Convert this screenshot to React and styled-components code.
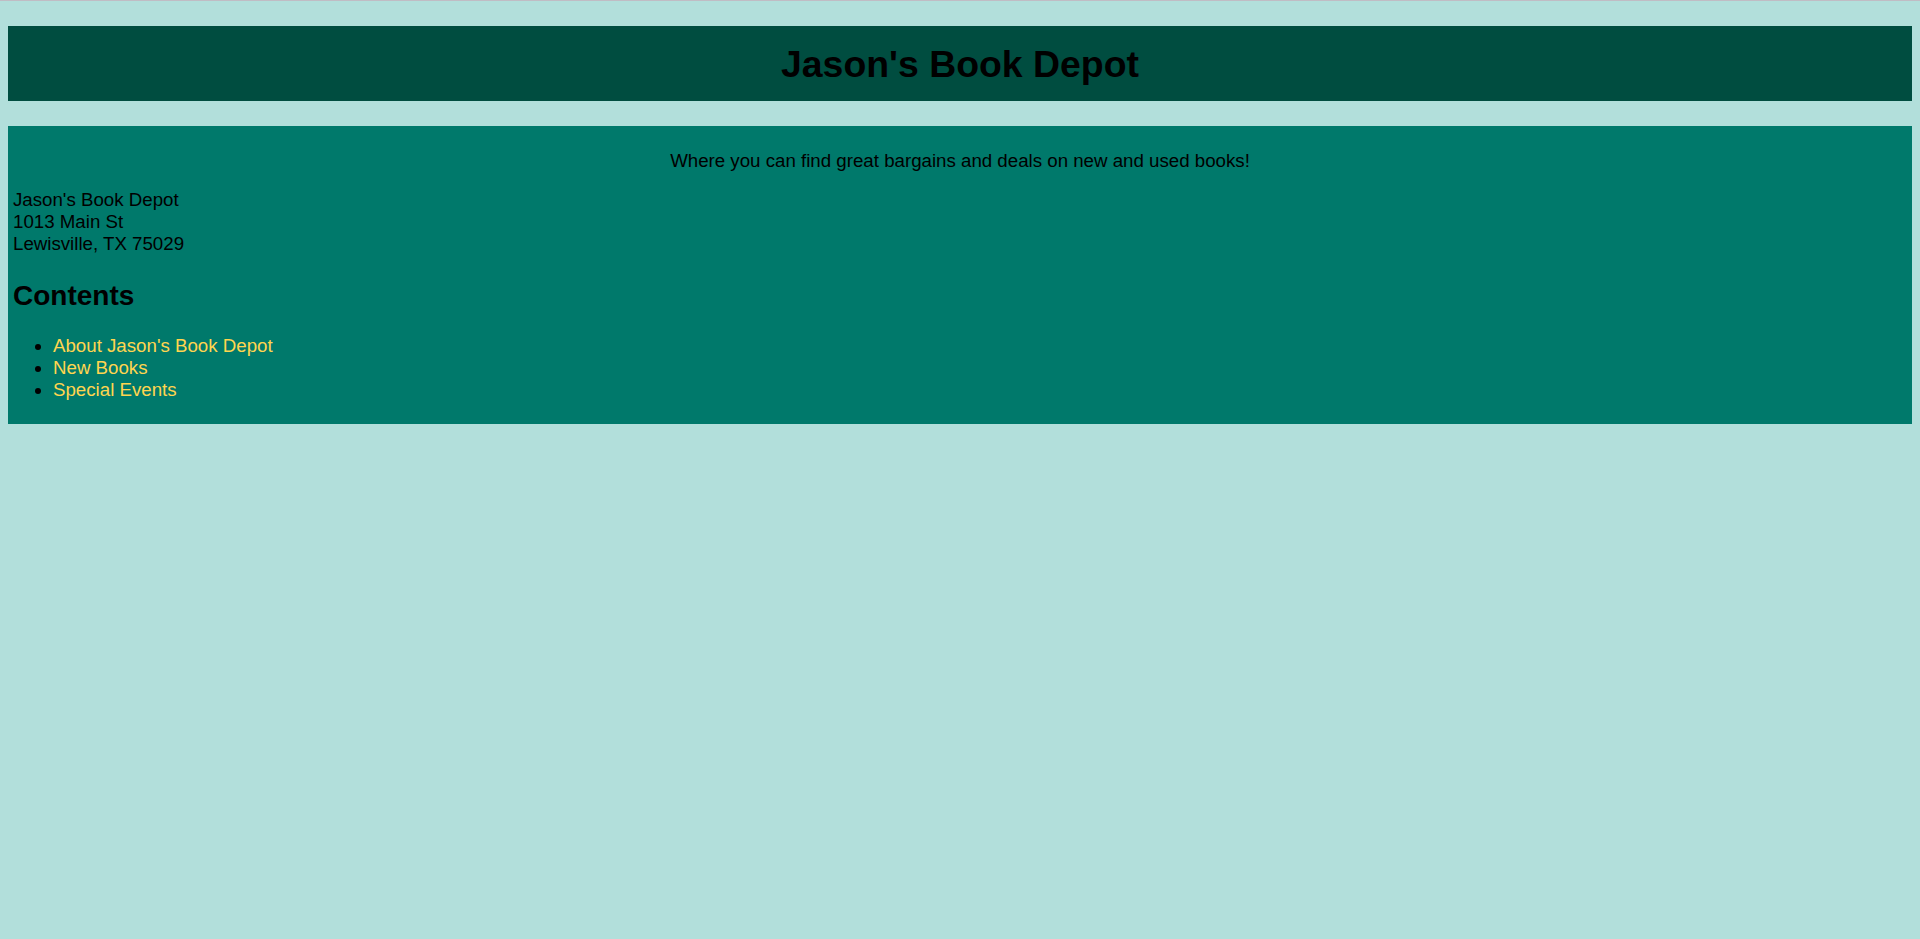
import React from "react";
import styled, { createGlobalStyle } from "styled-components";

const GlobalStyle = createGlobalStyle`
  html {
    background: #b2dfdb;
    border-top: 1px solid #c0bcc4;
  }
  body {
    margin: 0;
    padding: 0 8px;
    background: #b2dfdb;
    font-family: "Liberation Sans", Arial, sans-serif;
    font-size: 18.7px;
    color: #000;
  }
`;

const Page = styled.div`
  display: flex;
  flex-direction: column;
  gap: 25px;
  padding-top: 25px;
`;

const Header = styled.header`
  background: #004d40;
  height: 75px;
  display: flex;
  align-items: center;
  justify-content: center;
`;

const Title = styled.h1`
  margin: 0;
  font-size: 37.4px;
  font-weight: bold;
  line-height: 42px;
  padding-top: 1px;
`;

const Panel = styled.main`
  background: #00796b;
  padding: 4px 5px 5px;
  display: flow-root;
`;

const Tagline = styled.p`
  text-align: center;
  margin: 20px 0 17px;
  line-height: 22px;
`;

const Address = styled.address`
  font-style: normal;
  line-height: 22px;
`;

const SectionTitle = styled.h2`
  font-size: 28px;
  font-weight: bold;
  margin: 25px 0 23px;
  line-height: 32px;
`;

const LinkList = styled.ul`
  margin: 0 0 18px;
  padding-left: 40px;
  line-height: 22px;
  li::marker {
    color: #000;
  }
`;

const NavLink = styled.a`
  color: #ffd54f;
  text-decoration: none;
`;

const links = ["About Jason's Book Depot", "New Books", "Special Events"];

export default function App() {
  return (
    <>
      <GlobalStyle />
      <Page>
        <Header>
          <Title>Jason's Book Depot</Title>
        </Header>
        <Panel>
          <Tagline>
            Where you can find great bargains and deals on new and used books!
          </Tagline>
          <Address>
            Jason's Book Depot
            <br />
            1013 Main St
            <br />
            Lewisville, TX 75029
          </Address>
          <SectionTitle>Contents</SectionTitle>
          <LinkList>
            {links.map((l) => (
              <li key={l}>
                <NavLink href="#">{l}</NavLink>
              </li>
            ))}
          </LinkList>
        </Panel>
      </Page>
    </>
  );
}
